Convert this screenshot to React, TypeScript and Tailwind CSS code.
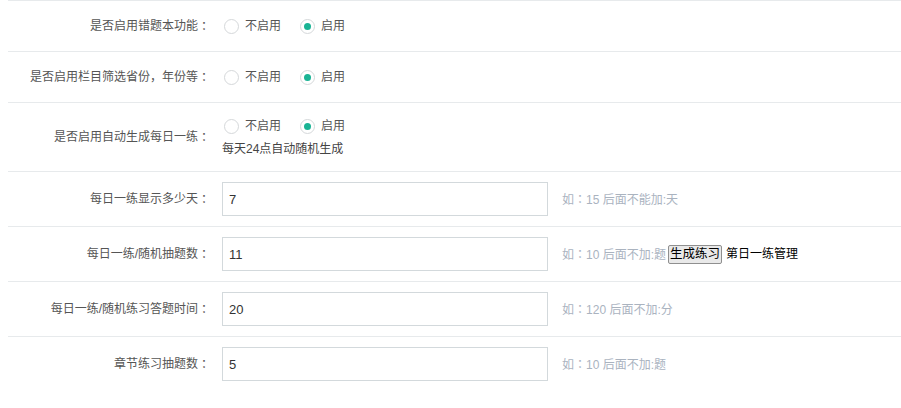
import React from "react";

const font = { fontFamily: '"Liberation Sans", "Noto Sans CJK SC", sans-serif' };
const tc = { fontFamily: '"Noto Sans CJK TC", sans-serif' };

function Radio({ checked, label }: { checked?: boolean; label: string }) {
  return (
    <label className="flex items-center mr-[19px]">
      <span className="w-[15px] h-[15px] rounded-full border border-[#d5d8da] bg-white flex items-center justify-center">
        {checked && <span className="w-[7px] h-[7px] rounded-full bg-[#1ab394]" />}
      </span>
      <span className="ml-[6px] text-[12px] text-[#555]">{label}</span>
    </label>
  );
}

function Label({ text }: { text: string }) {
  return (
    <div className="w-[202px] shrink-0 flex justify-end text-[12px] text-[#555] whitespace-nowrap">
      <span>{text}</span>
      <span className="w-[12px] text-center" style={tc}>：</span>
    </div>
  );
}

function RadioRow({ label, help }: { label: string; help?: string }) {
  return (
    <div className={`flex items-center border-t border-[#e7eaec] ${help ? "h-[69px]" : "h-[51px]"}`}>
      <Label text={label} />
      <div className="ml-[14px] flex flex-col">
        <div className="flex items-center h-[20px]">
          <Radio label="不启用" />
          <Radio checked label="启用" />
        </div>
        {help && <div className="mt-[4px] ml-[-2px] text-[12px] text-[#444]">{help}</div>}
      </div>
    </div>
  );
}

function InputRow({ label, value, hint, extra }: { label: string; value: string; hint: string; extra?: boolean }) {
  return (
    <div className="flex items-center border-t border-[#e7eaec] h-[55px]">
      <Label text={label} />
      <input
        readOnly
        value={value}
        className="ml-[12px] w-[326px] h-[34px] border border-[#d3d9dc] px-[6px] text-[13px] text-[#333] outline-none"
        style={font}
      />
      <span className="ml-[14px] text-[12px] text-[#aab3bf] whitespace-nowrap">
        如<span style={tc}>：</span>
        {hint}
      </span>
      {extra && (
        <>
          <button
            className="ml-[2px] h-[19px] px-[1px] text-[12.5px] leading-none text-black bg-[#e9e9e9] border border-[#8f8f8f] rounded-[2px]"
            style={font}
          >
            生成练习
          </button>
          <span className="ml-[4px] text-[12px] text-black">第日一练管理</span>
        </>
      )}
    </div>
  );
}

export default function App() {
  return (
    <div className="w-[901px] h-[408px] bg-white overflow-hidden" style={font}>
      <div className="ml-[8px]">
        <RadioRow label="是否启用错题本功能" />
        <RadioRow label="是否启用栏目筛选省份，年份等" />
        <RadioRow label="是否启用自动生成每日一练" help="每天24点自动随机生成" />
        <InputRow label="每日一练显示多少天" value="7" hint="15 后面不能加:天" />
        <InputRow label="每日一练/随机抽题数" value="11" hint="10 后面不加:题" extra />
        <InputRow label="每日一练/随机练习答题时间" value="20" hint="120 后面不加:分" />
        <InputRow label="章节练习抽题数" value="5" hint="10 后面不加:题" />
      </div>
    </div>
  );
}
